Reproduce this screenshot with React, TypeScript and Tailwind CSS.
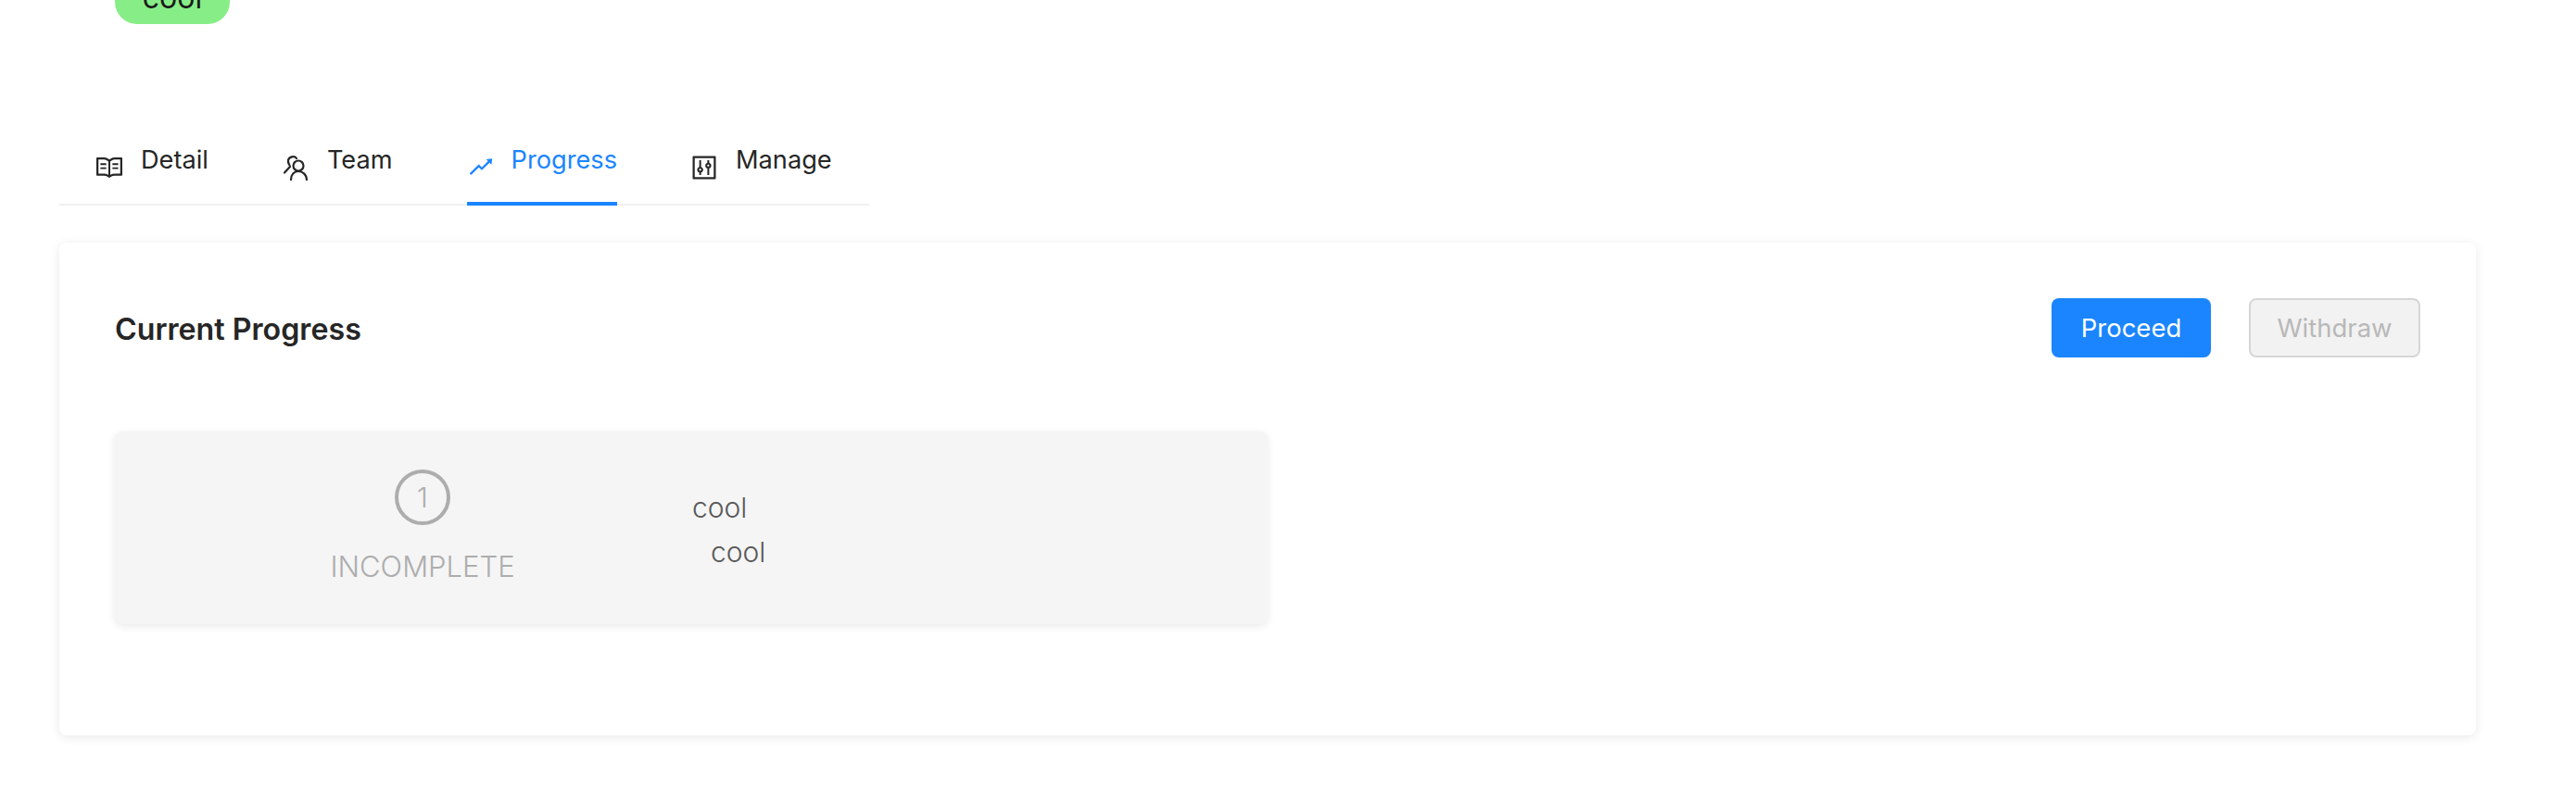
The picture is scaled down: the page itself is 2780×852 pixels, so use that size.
import React from 'react';
import { AiOutlineRead, AiOutlineRise, AiOutlineControl } from 'react-icons/ai';

const TeamIcon = () => (
  <svg width="28" height="28" viewBox="0 0 28 28" fill="none" stroke="currentColor" strokeWidth="2.2" strokeLinecap="round">
    <circle cx="17" cy="12" r="5.500" />
    <path d="M9 27c0-5 3-9 8-9s9 4 9 9" />
    <path d="M15 4c-2-3-8-2-9 2-.5 2 .5 4 1.500 5.500" />
    <path d="M8 13l-6 6.500" />
  </svg>
);

const tabs = [
  { name: 'Detail', icon: <AiOutlineRead size={32} className="-ml-0.5" /> },
  { name: 'Team', icon: <TeamIcon /> },
  { name: 'Progress', icon: <AiOutlineRise size={30} className="-mt-0.5" /> },
  { name: 'Manage', icon: <AiOutlineControl size={32} className="-ml-0.5" /> },
];

export default function App() {
  return (
    <div className="h-[852px] overflow-hidden bg-white px-16 font-['Inter',sans-serif] text-[27.500px] text-[#262626]">
      <div className="-mt-[30px] ml-[60px] flex h-14 w-[124px] items-center justify-center rounded-3xl bg-[#87ee87] text-[32px] text-[#1a1a1a]">
        cool
      </div>

      <div className="mt-[108px] flex h-[88px] w-[874px] gap-20 border-b-2 border-[#f0f0f0] px-10 text-[27.200px]">
        {tabs.map((tab) => {
          const active = tab.name === 'Progress';
          return (
            <div
              key={tab.name}
              className={
                active
                  ? 'relative flex h-[88px] items-center gap-4 text-[#1a85ff]'
                  : 'relative flex h-[88px] items-center gap-4'
              }
            >
              <span className="mt-[5px] w-8 shrink-0">{tab.icon}</span>
              <span className="-mt-[9px]">{tab.name}</span>
              {active && <span className="absolute inset-x-0 bottom-0 h-1 bg-[#1a85ff]" />}
            </div>
          );
        })}
      </div>

      <div className="mt-10 h-[532px] w-[2608px] rounded-lg bg-white px-[60px] pt-[60px] shadow-[0_2px_12px_rgba(0,0,0,0.09)]">
        <div className="flex items-center justify-between">
          <h2 className="mt-1 text-[32.200px] font-semibold">Current Progress</h2>
          <div className="flex gap-[41px]">
            <button className="h-16 w-[172px] rounded-lg bg-[#1a85ff] pt-0.5 text-white">Proceed</button>
            <button className="h-16 w-[185px] rounded-lg border-2 border-[#d6d6d6] bg-[#f2f2f2] pt-0.5 text-[#b8b8b8]">Withdraw</button>
          </div>
        </div>

        <div className="mt-[80px] flex h-[208px] w-[1244px] rounded-lg bg-[#f5f5f5] shadow-[0_2px_8px_rgba(0,0,0,0.09)]">
          <div className="ml-[232px] flex w-[200px] flex-col items-center pt-[41px] text-[#adadad]">
            <div className="flex h-[60px] w-[60px] items-center justify-center rounded-full border-4 border-[#adadad] text-[30px] font-light">
              1
            </div>
            <div className="mt-[22px] text-[31px] font-light whitespace-nowrap">INCOMPLETE</div>
          </div>
          <div className="ml-[191px] pt-[58px] text-[30px] leading-[48px] font-light text-[#595959]">
            <div>cool</div>
            <div className="ml-5">cool</div>
          </div>
        </div>
      </div>
    </div>
  );
}
